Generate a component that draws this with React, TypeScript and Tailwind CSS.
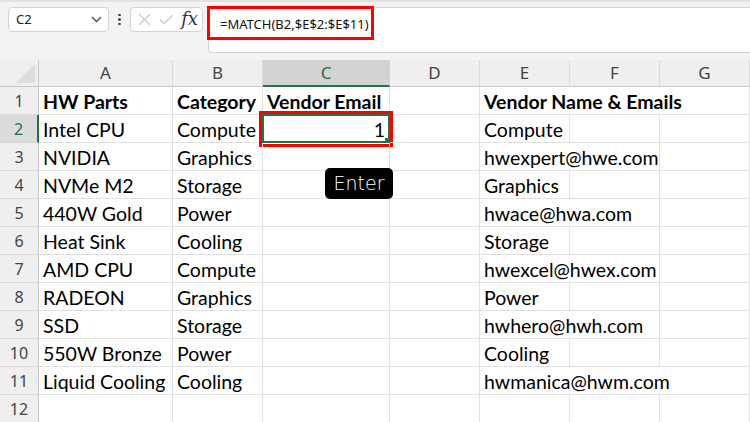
import React from "react";

const data: string[][] = [
  ["HW Parts", "Category", "Vendor Email", "", "Vendor Name & Emails", "", ""],
  ["Intel CPU", "Compute", "1", "", "Compute", "", ""],
  ["NVIDIA", "Graphics", "", "", "hwexpert@hwe.com", "", ""],
  ["NVMe M2", "Storage", "", "", "Graphics", "", ""],
  ["440W Gold", "Power", "", "", "hwace@hwa.com", "", ""],
  ["Heat Sink", "Cooling", "", "", "Storage", "", ""],
  ["AMD CPU", "Compute", "", "", "hwexcel@hwex.com", "", ""],
  ["RADEON", "Graphics", "", "", "Power", "", ""],
  ["SSD", "Storage", "", "", "hwhero@hwh.com", "", ""],
  ["550W Bronze", "Power", "", "", "Cooling", "", ""],
  ["Liquid Cooling", "Cooling", "", "", "hwmanica@hwm.com", "", ""],
  ["", "", "", "", "", "", ""],
];

const letters = ["A", "B", "C", "D", "E", "F", "G"];

const cellFont = { fontFamily: "Lato, 'Liberation Sans', sans-serif" };
const uiFont = { fontFamily: "'Noto Sans', 'Open Sans', sans-serif" };

export default function App() {
  return (
    <div className="w-[750px] h-[422px] overflow-hidden bg-[#f3f3f3] relative">
      {/* Top bar */}
      <div className="h-[60px] border-t-2 border-[#e2e2e2] flex items-start pt-[5px] pl-[8px]" style={uiFont}>
        <div className="w-[101px] h-[25px] bg-white border border-[#d4d4d4] rounded-[4px] flex items-center justify-between pl-[7px] pr-[6px]">
          <span className="text-[13px] text-[#222]">C2</span>
          <svg width="11" height="7" viewBox="0 0 11 7" fill="none">
            <path d="M1 1 L5.5 5.5 L10 1" stroke="#444" strokeWidth="1.3" />
          </svg>
        </div>
        <div className="w-[21px] h-[25px] flex flex-col items-center justify-center gap-[2px]">
          <span className="w-[2.5px] h-[2.5px] rounded-full bg-[#444]" />
          <span className="w-[2.5px] h-[2.5px] rounded-full bg-[#444]" />
          <span className="w-[2.5px] h-[2.5px] rounded-full bg-[#444]" />
        </div>
        <div className="w-[73px] h-[25px] bg-white border border-[#d4d4d4] rounded-[4px] flex items-center pl-[7px] pr-[4px] justify-between">
          <svg width="13" height="13" viewBox="0 0 13 13" fill="none">
            <path d="M1 1 L12 12 M12 1 L1 12" stroke="#c6c6c6" strokeWidth="1.1" />
          </svg>
          <svg width="15" height="11" viewBox="0 0 15 11" fill="none">
            <path d="M1 5.5 L5 9.5 L14 1" stroke="#c6c6c6" strokeWidth="1.1" />
          </svg>
          <span className="text-[18px] italic text-[#333] leading-none pb-[2px]" style={{ fontFamily: "'DejaVu Serif', 'Liberation Serif', serif" }}>
            fx
          </span>
        </div>
        <div className="ml-[5px] flex-1 h-[46px] bg-white border border-r-0 border-[#d4d4d4] rounded-l-[4px] relative">
          <div className="absolute left-[-2px] top-[-2px] w-[167px] h-[34px] border-[3px] border-[#ff0000]" />
          <div className="absolute left-[11px] top-[7px] text-[13px] text-[#111] leading-[18px]">=MATCH(B2,$E$2:$E$11)</div>
        </div>
      </div>

      {/* Grid */}
      <div className="grid grid-cols-[39px_134px_90px_127px_90px_90px_90px_90px] grid-rows-[27px_repeat(12,28px)] bg-white">
        {/* header row */}
        <div className="bg-[#efefef] border-r border-b border-[#c8c8c8] relative">
          <svg className="absolute right-[3px] bottom-[3px]" width="19" height="19" viewBox="0 0 19 19">
            <path d="M19 0 L19 19 L0 19 Z" fill="#dcdcdc" />
          </svg>
        </div>
        {letters.map((l) => (
          <div
            key={l}
            className={
              l === "C"
                ? "bg-[#d3d3d3] border-r border-[#d4d4d4] border-b-2 border-b-[#217346] flex items-center justify-center text-[17px] text-[#1e7145]"
                : "bg-[#efefef] border-r border-[#dadada] border-b border-b-[#c8c8c8] flex items-center justify-center text-[17px] text-[#444]"
            }
            style={uiFont}
          >
            {l}
          </div>
        ))}

        {data.map((row, ri) => (
          <React.Fragment key={ri}>
            <div
              className={
                ri === 1
                  ? "bg-[#dcdcdc] border-r-2 border-[#217346] border-b border-b-[#d4d4d4] flex items-center justify-center text-[16px] text-[#1e7145]"
                  : "bg-[#efefef] border-r border-[#c8c8c8] border-b border-b-[#dadada] flex items-center justify-center text-[16px] text-[#444]"
              }
              style={uiFont}
            >
              {ri + 1}
            </div>
            {row.map((val, ci) => {
              const overflow =
                (ci === 4 && (ri === 0 || val.includes("@"))) || (ci === 5 && (ri === 0 || ri === 10));
              const selected = ri === 1 && ci === 2;
              const bold = ri === 0;
              return (
                <div
                  key={ci}
                  className={
                    (overflow ? "border-b border-[#e1e1e1] " : "border-r border-b border-[#e1e1e1] ") +
                    "relative flex items-end pb-[1px] whitespace-nowrap text-[19.5px] leading-[23px] text-black " +
                    (selected ? "justify-end pr-[4px] " : "pl-[4px] ") +
                    (bold ? "font-bold" : "font-normal")
                  }
                  style={cellFont}
                >
                  {selected && (
                    <>
                      <div className="absolute left-[-1px] top-[-1px] right-[-1px] bottom-[-1px] border-2 border-[#217346]" />
                      <div className="absolute left-[-4px] top-[-4px] right-[-4px] bottom-[-5px] border-[3px] border-[#ff0000]" />
                      <div className="absolute right-[-1px] bottom-[-1px] w-[5px] h-[5px] bg-[#217346]" />
                    </>
                  )}
                  <span className="relative">{val}</span>
                </div>
              );
            })}
          </React.Fragment>
        ))}
      </div>

      {/* Enter tooltip */}
      <div
        className="absolute left-[325px] top-[168px] w-[68px] h-[31px] bg-black rounded-[5px] flex items-center justify-center text-white text-[19px]"
        style={{ fontFamily: "'DejaVu Sans', sans-serif", fontWeight: 300 }}
      >
        Enter
      </div>
    </div>
  );
}
